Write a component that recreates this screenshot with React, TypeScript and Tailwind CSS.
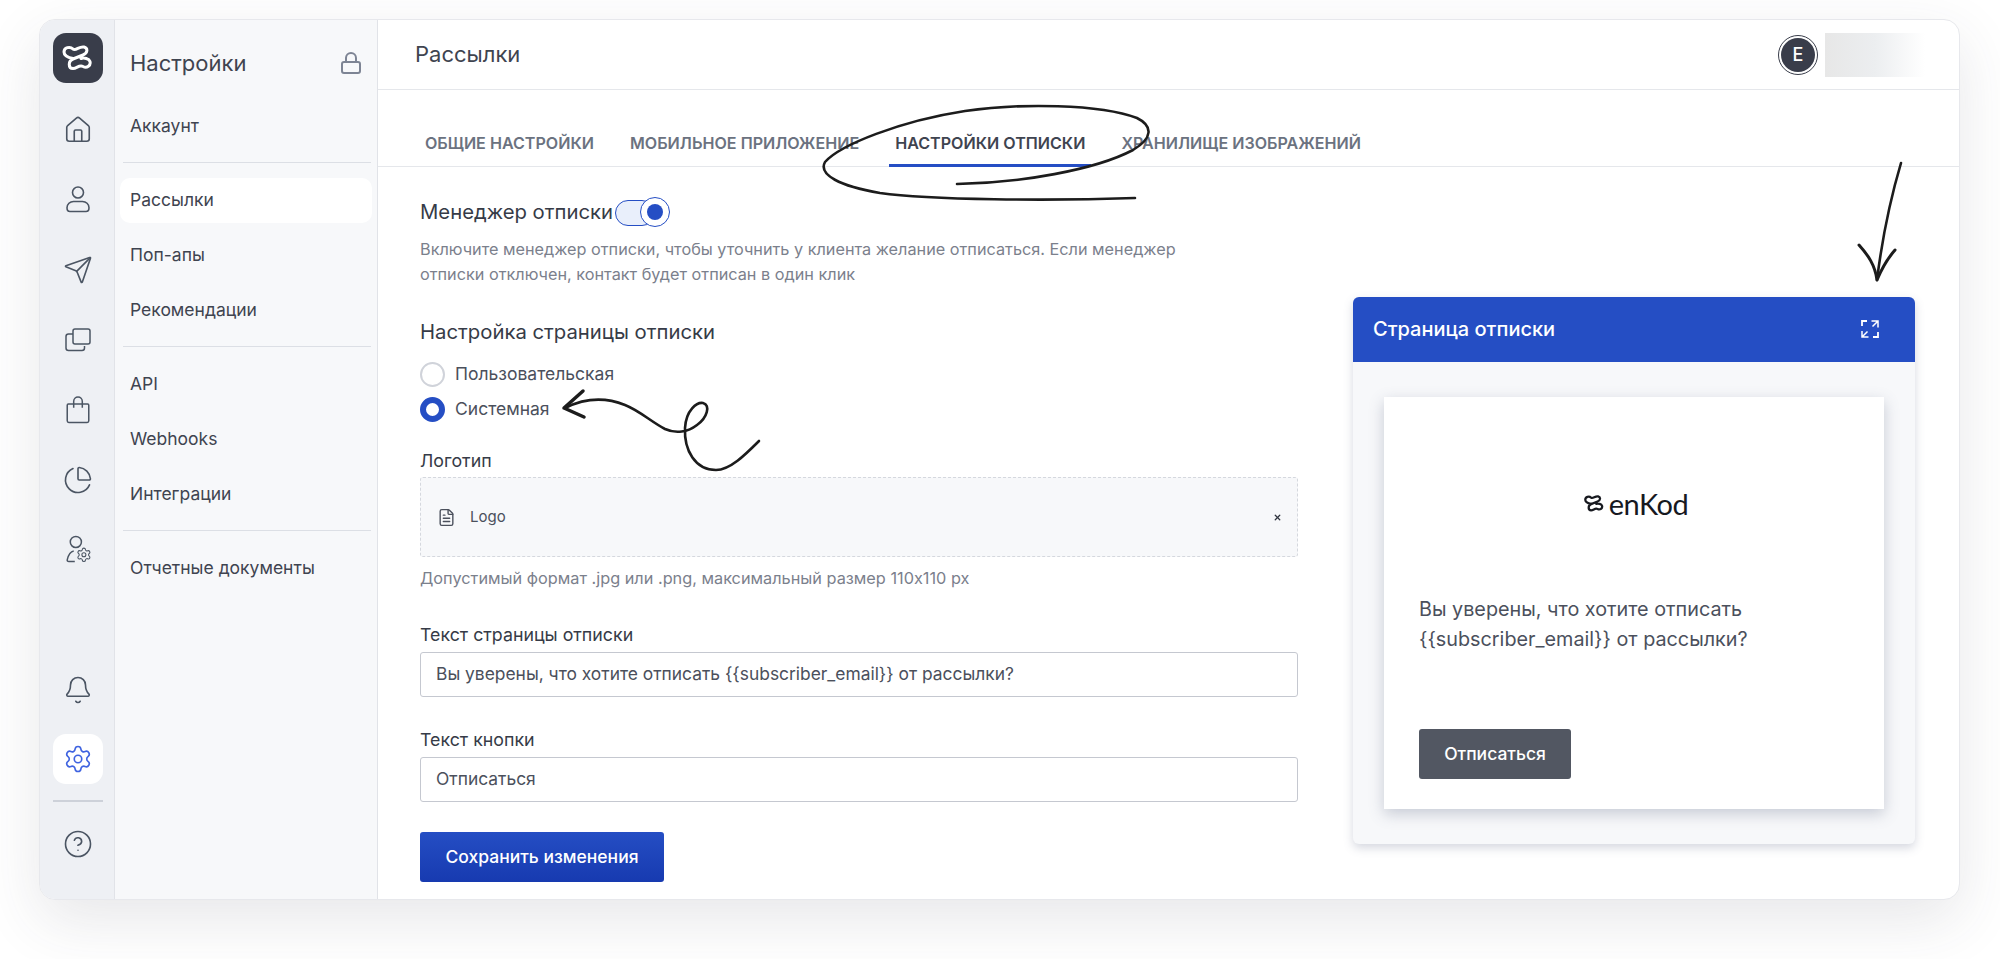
import { Bell, ChartPie, CircleHelp, FileText, House, Lock, Send, Settings, X } from "lucide-react";

const railIcon = "h-[30px] w-[30px] text-[#4b5563]";

function PersonIcon() {
  return (
    <svg viewBox="0 0 28 28" fill="none" stroke="currentColor" strokeWidth="1.6" className="h-[28px] w-[28px] text-[#4b5563]">
      <circle cx="14" cy="6.500" r="5.500" />
      <path d="M9.500 15.500h9c3.500 0 6.500 2.700 6.500 6.200 0 2.300-1.200 3.800-3 3.800H6c-1.800 0-3-1.500-3-3.800 0-3.500 3-6.200 6.500-6.200Z" />
    </svg>
  );
}

function LayersIcon() {
  return (
    <svg viewBox="0 0 26 26" fill="none" stroke="currentColor" strokeWidth="1.5" className="h-[26px] w-[26px] text-[#4b5563]">
      <rect x="8" y="2" width="17" height="15" rx="2" />
      <path d="M8 7H3.500C2.100 7 1 8.100 1 9.500V21c0 1.400 1.100 2.500 2.500 2.500H17c1.400 0 2.500-1.100 2.500-2.500v-2" />
    </svg>
  );
}

function BagIcon() {
  return (
    <svg viewBox="0 0 26 26" fill="none" stroke="currentColor" strokeWidth="1.4" className="h-[28px] w-[28px] text-[#4b5563]">
      <path d="M4 7.500h18a1 1 0 0 1 1 1V23a1.500 1.500 0 0 1-1.500 1.500h-17A1.500 1.500 0 0 1 3 23V8.500a1 1 0 0 1 1-1Z" />
      <path d="M9 11V5a4 4 0 0 1 8 0v6" />
    </svg>
  );
}

function UserGearIcon() {
  return (
    <svg viewBox="0 0 28 28" fill="none" stroke="currentColor" strokeWidth="1.400" className="h-[30px] w-[30px] text-[#4b5563]">
      <circle cx="12" cy="6.500" r="5.200" />
      <path d="M10 15c-3 .5-5 4-6 8-.3 1.200.3 1.700 1.500 1.700H11" />
      <Settings x="12" y="11" width="15" height="15" strokeWidth="1.600" />
    </svg>
  );
}

function LogoMark({ className, weight }: { className: string; weight: number }) {
  return (
    <svg viewBox="13 15 31 26" fill="none" stroke="currentColor" strokeWidth={weight} strokeLinecap="round" className={className}>
      <path d="M24 28.500c-4-.8-9-2-9-6.500 0-4.500 6-6 9-3 3 2.200 6-3 11-2 4 1 4 6-1 8l-10 4c-5 2-5 9.500 0 9.500 4 0 6-4 10-2 4 2 8-1 7-5-1-3-6-4-9-3" />
    </svg>
  );
}

function ExpandIcon() {
  return (
    <svg viewBox="0 0 18 18" fill="none" stroke="currentColor" strokeWidth="1.800" className="h-[18px] w-[18px] text-white">
      <path d="M1 6V1h5M17 12v5h-5" />
      <path d="M10.500 1H17v6.500M17 1l-5.500 5.500M1 11v6h6.500M1 17l5.500-5.500" strokeWidth="1.500" />
    </svg>
  );
}

const topIcons = [
  <House key="home" className={railIcon} strokeWidth={1.3} />,
  <PersonIcon key="person" />,
  <Send key="send" className={railIcon} strokeWidth={1.3} />,
  <LayersIcon key="layers" />,
  <BagIcon key="bag" />,
  <ChartPie key="pie" className={railIcon} strokeWidth={1.3} />,
  <UserGearIcon key="user-gear" />,
];

const menuGroups = [
  ["Аккаунт"],
  ["Рассылки", "Поп-апы", "Рекомендации"],
  ["API", "Webhooks", "Интеграции"],
  ["Отчетные документы"],
];

const tabs = ["Общие настройки", "Мобильное приложение", "Настройки отписки", "Хранилище изображений"];

function IconRail() {
  return (
    <aside className="flex w-[75px] shrink-0 flex-col items-center border-r border-[#e1e3e8] bg-[#eef0f4] pl-[1px] pt-[13px]">
      <div className="flex h-[50px] w-[50px] items-center justify-center rounded-[13px] bg-[#393d4a] text-white">
        <LogoMark className="h-[26px] w-[31px]" weight={3} />
      </div>
      <div className="mt-[22px] flex flex-col gap-[20px]">
        {topIcons.map((icon) => (
          <div key={icon.key} className="flex h-[50px] w-[50px] items-center justify-center">
            {icon}
          </div>
        ))}
      </div>
      <div className="mt-auto flex h-[50px] w-[50px] items-center justify-center">
        <Bell className={railIcon} strokeWidth={1.3} />
      </div>
      <div className="mt-[19px] flex h-[50px] w-[50px] items-center justify-center rounded-[13px] bg-white">
        <Settings className="h-[30px] w-[30px] text-[#3f63e0]" strokeWidth={1.3} />
      </div>
      <div className="mt-[16px] h-[2px] w-[50px] bg-[#cdd1d9]" />
      <div className="mb-[30px] mt-[17px] flex h-[50px] w-[50px] items-center justify-center">
        <CircleHelp className={railIcon} strokeWidth={1.3} />
      </div>
    </aside>
  );
}

function SettingsMenu() {
  return (
    <nav className="w-[263px] shrink-0 border-r border-[#e1e3e8] bg-[#f7f8fa] px-[5px] text-[#3f4450]">
      <div className="flex h-[84px] items-center justify-between pl-[10px] pr-[9px] pt-[2px]">
        <span className="text-[22px]">Настройки</span>
        <Lock className="h-[24px] w-[24px] text-[#7d8494]" strokeWidth={2} />
      </div>
      {menuGroups.map((group, index) => (
        <div key={group[0]}>
          {index > 0 && <div className="ml-[3px] mr-[1px] mt-[13px] mb-[15px] h-px bg-[#dcdfe5]" />}
          <ul className="flex flex-col gap-[10px]">
            {group.map((item) => (
              <li
                key={item}
                className={`flex h-[45px] items-center rounded-[10px] pl-[10px] text-[17.5px] ${
                  item === "Рассылки" ? "bg-white" : ""
                }`}
              >
                {item}
              </li>
            ))}
          </ul>
        </div>
      ))}
    </nav>
  );
}

function Field({ label, value, top }: { label: string; value: string; top: string }) {
  return (
    <div className={top}>
      <div className="text-[17.8px] leading-[24px] text-[#363b47]">{label}</div>
      <div className="mt-[5px] flex h-[45px] items-center rounded-[3px] border border-[#c5c8d0] px-[15px] text-[17.4px] text-[#4b505c]">
        {value}
      </div>
    </div>
  );
}

function UnsubscribeForm() {
  return (
    <div className="w-[878px] shrink-0 pt-[30px]">
      <div className="flex h-[30px] items-center">
        <span className="text-[20.3px] text-[#363b47]">Менеджер отписки</span>
        <div className="relative ml-[2px] h-[27px] w-[55px]">
          <div className="mt-[1px] h-[26px] w-[40px] rounded-full border border-[#254ec4] bg-[#e9effb]" />
          <div className="absolute left-[25px] top-[-2px] flex h-[30px] w-[30px] items-center justify-center rounded-full border border-[#254ec4] bg-white">
            <div className="h-[16px] w-[16px] rounded-full bg-[#254ec4]" />
          </div>
        </div>
      </div>
      <p className="mt-[10px] w-[770px] text-[16.25px] leading-[25px] text-[#7b808c]">
        Включите менеджер отписки, чтобы уточнить у клиента желание отписаться. Если менеджер отписки отключен, контакт будет отписан в один клик
      </p>
      <h3 className="mt-[33px] text-[20.3px] leading-[24px] text-[#363b47]">Настройка страницы отписки</h3>
      <div className="mt-[18px] flex h-[25px] items-center gap-[10px] text-[17.5px] text-[#4b505c]">
        <span className="h-[25px] w-[25px] rounded-full border-2 border-[#d0d3da]" />
        Пользовательская
      </div>
      <div className="mt-[10px] flex h-[25px] items-center gap-[10px] text-[17.5px] text-[#4b505c]">
        <span className="h-[25px] w-[25px] rounded-full border-[6px] border-[#254ec4]" />
        Системная
      </div>
      <div className="mt-[27px] text-[17.8px] leading-[24px] text-[#363b47]">Логотип</div>
      <div className="mt-[4px] flex h-[80px] items-center rounded-[3px] border border-dashed border-[#d5d8de] bg-[#f7f8fa] pl-[16px] pr-[15px]">
        <FileText className="h-[19px] w-[19px] text-[#4b505c]" strokeWidth={1.75} />
        <span className="ml-[14px] text-[15px] text-[#4b505c]">Logo</span>
        <X className="ml-auto h-[9px] w-[9px] text-[#30343f]" strokeWidth={3.5} />
      </div>
      <p className="mt-[11px] text-[16.3px] leading-[20px] text-[#7b808c]">
        Допустимый формат .jpg или .png, максимальный размер 110x110 px
      </p>
      <Field label="Текст страницы отписки" value="Вы уверены, что хотите отписать {{subscriber_email}} от рассылки?" top="mt-[35px]" />
      <Field label="Текст кнопки" value="Отписаться" top="mt-[31px]" />
      <button className="mt-[30px] h-[50px] w-[244px] rounded-[3px] bg-gradient-to-b from-[#254ec4] to-[#173ab0] text-[17.5px] font-medium text-white">
        Сохранить изменения
      </button>
    </div>
  );
}

function PreviewPanel() {
  return (
    <section className="ml-[55px] mt-[130px] h-[547px] w-[562px] shrink-0 rounded-[6px] bg-[#f7f8fa] shadow-[0_4px_10px_rgba(90,100,130,0.25)]">
      <header className="flex h-[65px] items-center justify-between rounded-t-[6px] bg-[#254ec4] pb-[2px] pl-[20px] pr-[36px]">
        <span className="text-[20px] font-medium text-white">Страница отписки</span>
        <ExpandIcon />
      </header>
      <div className="mx-[31px] mt-[35px] flex h-[412px] w-[500px] flex-col bg-white pl-[35px] shadow-[0_5px_14px_rgba(90,100,130,0.3)]">
        <div className="mt-[87px] flex h-[38px] items-center justify-center gap-[5px] pr-[31px] text-[#17191f]">
          <LogoMark className="h-[17px] w-[20px]" weight={3.5} />
          <span className="font-['Lato',sans-serif] text-[29px] leading-none tracking-[-0.5px]">enKod</span>
        </div>
        <p className="mt-[72px] w-[400px] text-[19.8px] leading-[30px] text-[#4b505c]">
          Вы уверены, что хотите отписать {"{{subscriber_email}}"} от рассылки?
        </p>
        <button className="mt-[75px] h-[50px] w-[152px] rounded-[3px] bg-[#525762] text-[17.5px] font-medium text-white">
          Отписаться
        </button>
      </div>
    </section>
  );
}

export default function App() {
  return (
    <div className="relative h-[959px] w-[2000px] overflow-hidden bg-white pl-[39px] pt-[19px] font-['Inter',sans-serif]">
      <div className="flex h-[881px] w-[1921px] overflow-hidden rounded-[16px] border border-[#e7e8ec] bg-white shadow-[0_20px_60px_rgba(60,60,70,0.12)]">
        <IconRail />
        <SettingsMenu />
        <main className="min-w-0 flex-1">
          <header className="flex h-[70px] items-center justify-between border-b border-[#e5e7eb] pl-[37px] pr-[34px]">
            <span className="text-[22px] text-[#3f4450]">Рассылки</span>
            <div className="flex items-center gap-[7px]">
              <div className="flex h-[40px] w-[40px] items-center justify-center rounded-full border border-[#393d4a] p-[2px]">
                <div className="flex h-full w-full items-center justify-center rounded-full bg-[#393d4a] text-[18px] font-medium text-white">
                  E
                </div>
              </div>
              <div className="h-[44px] w-[100px] bg-gradient-to-r from-[#e7e7e7] via-[#eceef0] to-white" />
            </div>
          </header>
          <div className="flex h-[77px] items-end gap-[24px] border-b border-[#e5e7eb] pl-[41px]">
            {tabs.map((tab) => (
              <div
                key={tab}
                className={`-mb-px flex h-[43px] items-start border-b-[3px] px-[6px] pt-[9px] text-[16.1px] font-semibold uppercase leading-[20px] ${
                  tab === "Настройки отписки" ? "border-[#254ec4] text-[#3f4450]" : "border-transparent text-[#6b7280]"
                }`}
              >
                {tab}
              </div>
            ))}
          </div>
          <div className="flex pl-[42px]">
            <UnsubscribeForm />
            <PreviewPanel />
          </div>
        </main>
      </div>
      {/* hand-drawn annotations on top of the screenshot */}
      <svg
        viewBox="0 0 2000 959"
        fill="none"
        stroke="#1c1c1c"
        strokeLinecap="round"
        strokeLinejoin="round"
        className="pointer-events-none absolute left-0 top-0 h-[959px] w-[2000px]"
      >
        <path
          strokeWidth="2.600"
          d="M957 184C1020 183 1095 170 1133 150C1153 138 1153 126 1137 118C1100 104 1020 103 965 111C900 121 840 145 825 162C818 175 840 186 880 193C930 200 1050 201 1135 198"
        />
        <path
          strokeWidth="2.600"
          d="M759 441C745 455 730 470 716 470C695 470 684 450 685 428C686 410 697 402 703 403C711 405 707 418 697 425C688 432 676 434 665 429C650 421 640 411 625 405C605 397 585 398 565 408"
        />
        <path strokeWidth="3.500" d="M583 391L564 408L584 417" />
        <path strokeWidth="2.600" d="M1901 163C1890 200 1882 240 1877 280" />
        <path strokeWidth="3" d="M1859 245C1868 255 1875 265 1877 280C1882 268 1888 258 1895 250" />
      </svg>
    </div>
  );
}
